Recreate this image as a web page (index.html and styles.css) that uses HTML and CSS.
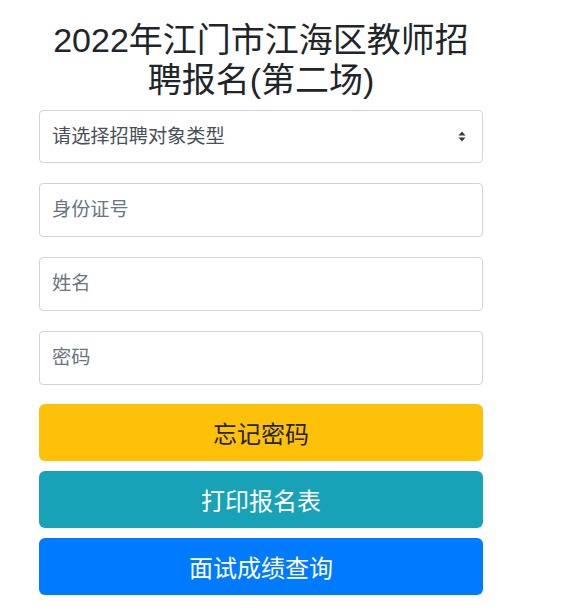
FILE: index.html
```html
<!DOCTYPE html>
<html lang="zh-CN">
<head>
  <meta charset="UTF-8">
  <meta name="viewport" content="width=device-width, initial-scale=1.0">
  <title>2022年江门市江海区教师招聘报名(第二场)</title>
  <link rel="stylesheet" href="styles.css">
</head>
<body>
  <div class="container">
    <h1 class="title">2022年江门市江海区教师招聘报名(第二场)</h1>

    <form class="login-form">
      <div class="select-wrap">
        <select class="form-control custom-select" name="type">
          <option value="">请选择招聘对象类型</option>
        </select>
        <svg class="select-arrows" width="8" height="11" viewBox="0 0 8 11">
          <path d="M4 0.5 L7.5 4.5 L0.5 4.5 Z M4 10.5 L7.5 6.5 L0.5 6.5 Z" fill="#343a40"/>
        </svg>
      </div>

      <input class="form-control" type="text" name="idcard" placeholder="身份证号">
      <input class="form-control" type="text" name="name" placeholder="姓名">
      <input class="form-control last" type="password" name="password" placeholder="密码">

      <button type="button" class="btn btn-warning">忘记密码</button>
      <button type="button" class="btn btn-info">打印报名表</button>
      <button type="button" class="btn btn-primary">面试成绩查询</button>
    </form>
  </div>
</body>
</html>
```

FILE: styles.css
```css
body {
  margin: 0;
  padding: 0;
  background-color: #fff;
  font-family: "Liberation Sans", "Noto Sans CJK SC", sans-serif;
  color: #212529;
}

.container {
  width: 444px;
  padding: 20px 0 0 39px;
}

.title {
  margin: 0 0 10px;
  font-size: 34px;
  font-weight: normal;
  line-height: 40px;
  text-align: center;
  color: #212529;
}

.login-form {
  display: flex;
  flex-direction: column;
}

.form-control {
  box-sizing: border-box;
  width: 100%;
  height: 54px;
  margin: 0 0 20px;
  padding: 0 12px;
  border: 1px solid #ced4da;
  border-radius: 4px;
  background-color: #fff;
  font-family: "Liberation Sans", "Noto Sans CJK SC", sans-serif;
  font-size: 19.2px;
  color: #495057;
  outline: none;
}

.form-control.last {
  margin-bottom: 19px;
}

.form-control::placeholder {
  color: #6c757d;
}

.select-wrap {
  position: relative;
}

.custom-select {
  height: 53px;
  appearance: none;
  -webkit-appearance: none;
  color: #495057;
}

.select-arrows {
  position: absolute;
  right: 17px;
  top: 21px;
}

.btn {
  box-sizing: border-box;
  width: 100%;
  height: 57px;
  margin-bottom: 10px;
  border: none;
  border-radius: 6px;
  font-family: "Liberation Sans", "Noto Sans CJK SC", sans-serif;
  font-size: 24px;
  cursor: pointer;
}

.btn-warning {
  background-color: #ffc107;
  color: #212529;
}

.btn-info {
  background-color: #17a2b8;
  color: #fff;
}

.btn-primary {
  background-color: #007bff;
  color: #fff;
}
```
